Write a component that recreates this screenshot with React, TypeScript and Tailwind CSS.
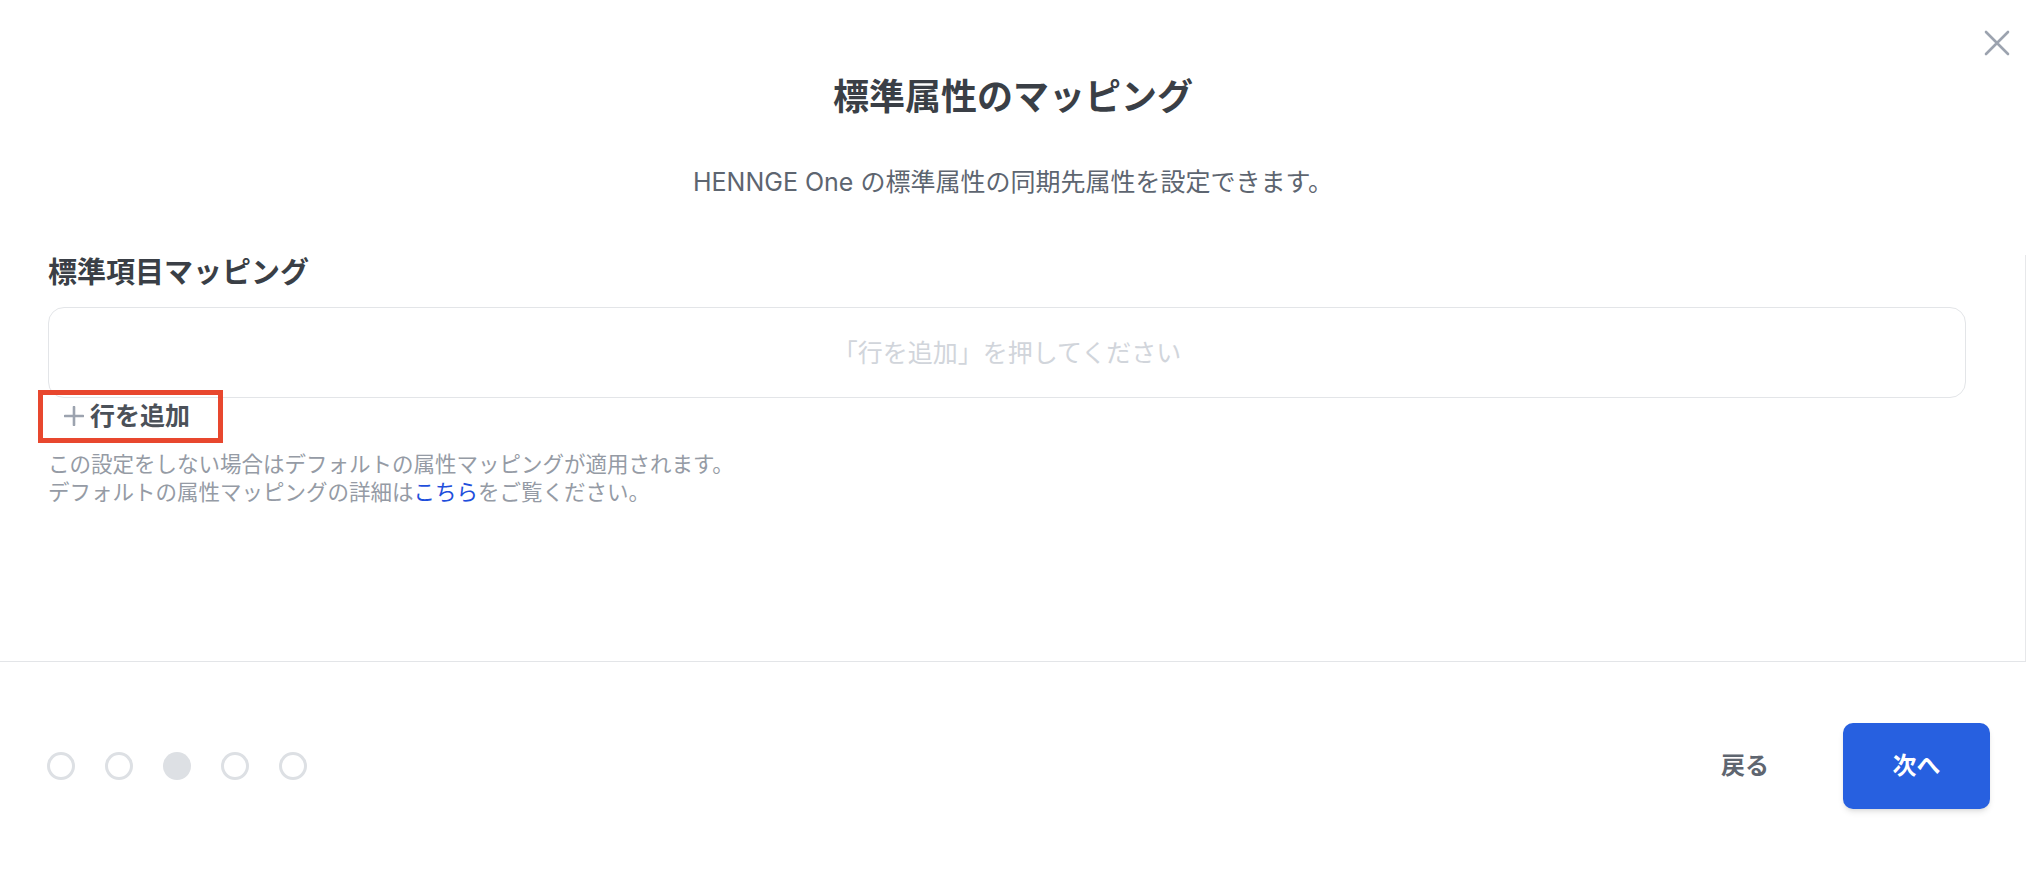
import { useState } from 'react';

const steps = [0, 1, 2, 3, 4];

function CloseIcon() {
  return (
    <svg width="26" height="26" viewBox="0 0 26 26" fill="none" stroke="currentColor" strokeWidth="2.6" strokeLinecap="round">
      <path d="M2 2L24 24M24 2L2 24" />
    </svg>
  );
}

function PlusIcon() {
  return (
    <svg width="20" height="20" viewBox="0 0 20 20" fill="none" stroke="currentColor" strokeWidth="2.6" strokeLinecap="round">
      <path d="M10 1V19M1 10H19" />
    </svg>
  );
}

export default function App() {
  const [current] = useState(2);

  return (
    <div className="h-[870px] w-full bg-white flex flex-col font-['Inter','Noto_Sans_CJK_JP',sans-serif] text-gray-700">
      {/* header */}
      <div className="relative flex flex-col items-center pt-[73px]">
        <button className="absolute top-[30px] right-[16px] text-[#9ca3af]">
          <CloseIcon />
        </button>
        <h1 className="text-[36px] leading-[48px] font-bold text-[#3a3f46]">標準属性のマッピング</h1>
        <p className="mt-[45px] text-[25px] leading-[32px] text-[#5d6570]">
          HENNGE One の標準属性の同期先属性を設定できます。
        </p>
      </div>

      {/* body */}
      <div className="flex flex-1 mt-[57px]">
        <div className="flex-1 pl-12 pr-[59px]">
          <h2 className="text-[29px] leading-[36px] font-bold text-[#3a3f46]">標準項目マッピング</h2>
          <div className="mt-4 h-[91px] rounded-[16px] border border-[#e3e5e8] flex items-center justify-center">
            <span className="text-[25px] leading-[32px] text-[#d1d5db]">「行を追加」を押してください</span>
          </div>
          <div className="relative inline-flex items-center gap-[6px] pl-[16px] h-[36px] text-[#4b5159]">
            <span className="text-[#9ca3af]">
              <PlusIcon />
            </span>
            <span className="text-[25px] leading-[36px] font-bold">行を追加</span>
            <span className="absolute left-[-10px] top-[-8px] w-[185px] h-[53px] border-[5px] border-[#e8472e]" />
          </div>
          <div className="mt-4 text-[21.5px] leading-[28px] text-[#959ba5]">
            <p>この設定をしない場合はデフォルトの属性マッピングが適用されます。</p>
            <p>
              デフォルトの属性マッピングの詳細は<a className="text-[#1f4fdc]">こちら</a>をご覧ください。
            </p>
          </div>
        </div>
        <div className="w-px bg-[#e7e8ea]" />
      </div>

      {/* footer */}
      <div className="h-[209px] border-t border-[#e3e5e8] flex items-center justify-between pl-[47px] pr-[36px]">
        <div className="flex items-center gap-[30px]">
          {steps.map((s) => (
            <span
              key={s}
              className={
                s === current
                  ? 'w-[28px] h-[28px] rounded-full bg-[#dde0e4]'
                  : 'w-[28px] h-[28px] rounded-full border-[3px] border-[#dde0e4]'
              }
            />
          ))}
        </div>
        <div className="flex items-center gap-[74px]">
          <button className="text-[24px] leading-[32px] font-bold text-[#5f6670]">戻る</button>
          <button className="w-[147px] h-[86px] rounded-[10px] bg-[#2760e0] shadow-md text-white text-[24px] font-bold">
            次へ
          </button>
        </div>
      </div>
    </div>
  );
}
